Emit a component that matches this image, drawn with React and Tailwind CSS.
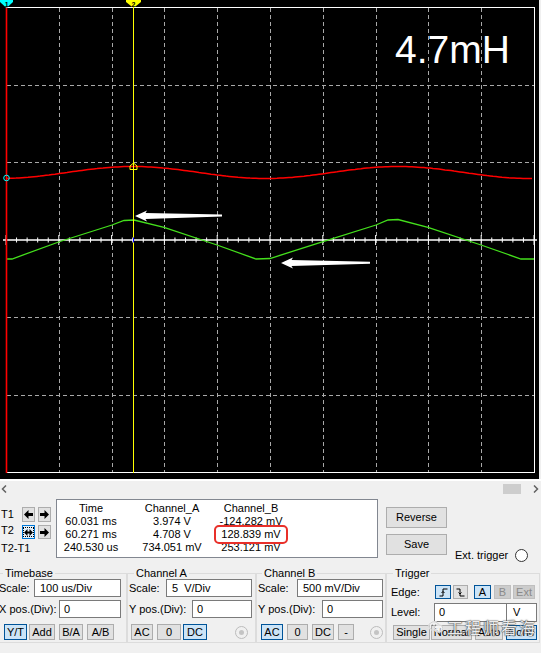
import React from 'react';

const gridX = [59.5, 112.5, 164.5, 217.5, 270.5, 323.5, 376.5, 428.5, 481.5];
const gridY = [85.5, 162.5, 317.5, 395.5];

const redPoints = (() => {
  const pts = [];
  for (let x = 7; x <= 534; x += 3) {
    const y = 172.5 - 6 * Math.cos((2 * Math.PI * (x - 133)) / 265);
    pts.push(x + ',' + y.toFixed(1));
  }
  return pts.join(' ');
})();

const greenPoints =
  '7,259 12,259 60,241.5 112,225 124,220.5 134,220 164,227.3 217,245 256,259 270,258.5 323,241.7 376,225 388,220 398,219.5 428,227.3 481,245 521,259 534,259';

const ticks = Array.from({ length: 51 }, (_, i) => ({ x: 6 + i * 10.56, major: i % 5 === 0 }));

function Scope() {
  return (
    <svg width="539" height="479" className="block">
      {gridX.map((x) => (
        <line key={'v' + x} x1={x} y1={8} x2={x} y2={472} stroke="#a8a8a8" strokeDasharray="4 3" />
      ))}
      {gridY.map((y) => (
        <line key={'h' + y} x1={7} y1={y} x2={534} y2={y} stroke="#a8a8a8" strokeDasharray="4 3" />
      ))}
      {/* frame */}
      <line x1={6} y1={7.5} x2={535} y2={7.5} stroke="#fff" />
      <line x1={534.5} y1={7} x2={534.5} y2={473} stroke="#fff" />
      <line x1={6} y1={472.5} x2={535} y2={472.5} stroke="#fff" />
      {/* centre axis */}
      <line x1={3} y1={240} x2={537} y2={240} stroke="#fff" strokeWidth="1.5" />
      {ticks.map((t) => (
        <line key={t.x} x1={t.x} y1={t.major ? 235 : 237.5} x2={t.x} y2={t.major ? 245 : 242.5} stroke="#fff" />
      ))}
      {/* traces */}
      <polyline points={redPoints} fill="none" stroke="#ff0000" strokeWidth="1.5" />
      <polyline points={greenPoints} fill="none" stroke="#44e01c" strokeWidth="1.3" />
      {/* cursors */}
      <line x1={6.5} y1={7} x2={6.5} y2={473} stroke="#ff0000" strokeWidth="1.6" />
      <line x1={133.5} y1={7} x2={133.5} y2={473} stroke="#ffff00" />
      <line x1={133.5} y1={237.5} x2={133.5} y2={242.5} stroke="#0000ff" />
      <polygon points="0,0 13,0 13,2 6.5,8 0,2" fill="#00ffff" />
      <text x="4.8" y="6.5" fontSize="7" fontWeight="bold" fontFamily="Liberation Sans" fill="#000">1</text>
      <polygon points="126,0 141,0 141,2 133.5,8 126,2" fill="#ffff00" />
      <text x="131.5" y="6.5" fontSize="7" fontWeight="bold" fontFamily="Liberation Sans" fill="#000">2</text>
      <circle cx={6.5} cy={178} r={2.8} fill="none" stroke="#00ffff" />
      <polygon points="133.5,163 137,166 137,169.5 130,169.5 130,166" fill="none" stroke="#ffff00" />
      {/* annotation arrows */}
      <polygon points="135,216 147,210.5 145.5,213 222,214.6 222,216.6 145.5,219 147,221.5" fill="#fff" />
      <polygon points="281,263 293,257.5 291.5,260 370,261.8 370,263.8 291.5,266 293,268.5" fill="#fff" />
      <text x="395" y="63" fontSize="39" fontFamily="Liberation Sans" fill="#fff">4.7mH</text>
    </svg>
  );
}

function Btn({ className = '', active, disabled, children }) {
  const tone = active
    ? 'bg-[#cce4f7] border-[#005499]'
    : disabled
    ? 'bg-[#cccccc] border-[#bfbfbf] text-[#8a8a8a]'
    : 'bg-[#e1e1e1] border-[#adadad]';
  return (
    <div className={'flex items-center justify-center border shrink-0 ' + tone + ' ' + className}>{children}</div>
  );
}

function Field({ className = '', children }) {
  return (
    <div className={'bg-white border border-[#7a7a7a] flex items-center pl-[4px] whitespace-pre shrink-0 ' + className}>
      {children}
    </div>
  );
}

function Radio({ className = '' }) {
  return (
    <div className={'w-[13px] h-[13px] rounded-full border border-[#bcbcbc] flex items-center justify-center shrink-0 ' + className}>
      <div className="w-[5px] h-[5px] rounded-full bg-[#c4c4c4]" />
    </div>
  );
}

function Arrow({ dir }) {
  const pts =
    dir === 'left'
      ? '0,4.5 4.5,0 4.5,3 9,3 9,6 4.5,6 4.5,9'
      : dir === 'right'
      ? '9,4.5 4.5,0 4.5,3 0,3 0,6 4.5,6 4.5,9'
      : '0,4.5 3.5,1 3.5,3.5 5.5,3.5 5.5,1 9,4.5 5.5,8 5.5,5.5 3.5,5.5 3.5,8';
  return (
    <svg width="9" height="9" viewBox="0 0 9 9">
      <polygon points={pts} fill="#000" />
    </svg>
  );
}

function Legend({ className = '', children }) {
  return <legend className={'px-[2px] leading-[12px] ' + className}>{children}</legend>;
}

export default function App() {
  return (
    <div className="relative w-[541px] h-[653px] overflow-hidden bg-[#f0f0f0] text-black text-[11px] leading-[13px] font-['Liberation_Sans',Arial,sans-serif]">
      <div className="w-[539px] h-[479px] bg-black">
        <Scope />
      </div>
      <div className="h-[2px] bg-white" />

      {/* scroll strip */}
      <div className="h-[15px] flex items-center pl-[1px] pr-[2px]">
        <svg width="6" height="8" viewBox="0 0 6 8">
          <polyline points="5,0.5 1.5,4 5,7.5" fill="none" stroke="#606060" strokeWidth="1.5" />
        </svg>
        <div className="ml-auto w-[18px] h-[10px] bg-[#cdcdcd]" />
        <svg width="6" height="8" viewBox="0 0 6 8" className="ml-[12px]">
          <polyline points="1,0.5 4.5,4 1,7.5" fill="none" stroke="#606060" strokeWidth="1.5" />
        </svg>
      </div>

      {/* cursor readout row */}
      <div className="flex h-[71px]">
        <div className="w-[56px] shrink-0 pt-[11px]">
          <div className="flex items-center h-[15px]">
            <span className="w-[22px] pl-[1px]">T1</span>
            <Btn className="w-[13px] h-[15px]"><Arrow dir="left" /></Btn>
            <Btn className="w-[13px] h-[15px] ml-[3px]"><Arrow dir="right" /></Btn>
          </div>
          <div className="flex items-center h-[14px] mt-[3px]">
            <span className="w-[22px] pl-[1px] -mt-[3px]">T2</span>
            <div className="w-[13px] h-[14px] border border-[#0078d7] bg-[#e5f1fb] flex items-center justify-center shrink-0">
              <div className="w-[11px] h-[10px] border border-dotted border-[#000] flex items-center justify-center">
                <Arrow dir="both" />
              </div>
            </div>
            <Btn className="w-[13px] h-[14px] ml-[3px]"><Arrow dir="right" /></Btn>
          </div>
          <div className="mt-[3px] pl-[1px]">T2-T1</div>
        </div>

        <div className="mt-[3px] h-[59px] w-[322px] shrink-0 bg-white border border-[#828790] pt-[2px] grid grid-cols-[68px_94px_64px] content-start text-center">
          <span>Time</span>
          <span>Channel_A</span>
          <span>Channel_B</span>
          <span>60.031 ms</span>
          <span>3.974 V</span>
          <span>-124.282 mV</span>
          <span>60.271 ms</span>
          <span>4.708 V</span>
          <span>
            <span className="relative inline-block">
              128.839 mV
              <span className="absolute -left-[7px] -right-[7px] -top-[3px] -bottom-[3px] border-2 border-[#e8302a] rounded-[5px]" />
            </span>
          </span>
          <span>240.530 us</span>
          <span>734.051 mV</span>
          <span>253.121 mV</span>
        </div>

        <div className="ml-[8px] pt-[11px] flex flex-col gap-[6px]">
          <Btn className="w-[61px] h-[21px]">Reverse</Btn>
          <Btn className="w-[61px] h-[21px]">Save</Btn>
        </div>

        <div className="ml-[8px] pt-[53px]">
          <div className="flex items-center h-[13px]">
            <span>Ext. trigger</span>
            <span className="ml-[7px] w-[13px] h-[13px] rounded-full border border-[#333] bg-white" />
          </div>
        </div>
      </div>

      {/* control groups */}
      <div className="flex">
        <fieldset className="w-[133px] shrink-0 -ml-[6px] border border-[#dcdcdc] pl-[4px] pr-[5px] pb-[2px]">
          <Legend className="ml-[4px]">Timebase</Legend>
          <div className="flex items-center justify-between h-[18px]">
            <span>Scale:</span>
            <Field className="w-[87px] h-[18px] pl-[5px]">100 us/Div</Field>
          </div>
          <div className="flex items-center justify-between h-[18px] mt-[3px]">
            <span>X pos.(Div):</span>
            <Field className="w-[62px] h-[18px]">0</Field>
          </div>
          <div className="flex h-[16px] mt-[6px] ml-[5px]">
            <Btn active className="w-[23px]">Y/T</Btn>
            <Btn className="w-[26px] ml-[2px]">Add</Btn>
            <Btn className="w-[24px] ml-[4px]">B/A</Btn>
            <Btn className="w-[27px] ml-[4px]">A/B</Btn>
          </div>
        </fieldset>

        <fieldset className="w-[129px] shrink-0 border border-[#dcdcdc] pl-[1px] pr-[3px] pb-[2px]">
          <Legend className="ml-[5px]">Channel A</Legend>
          <div className="flex items-center justify-between h-[18px]">
            <span>Scale:</span>
            <Field className="w-[86px] h-[18px] pl-[5px]">5  V/Div</Field>
          </div>
          <div className="flex items-center justify-between h-[18px] mt-[3px]">
            <span>Y pos.(Div):</span>
            <Field className="w-[60px] h-[18px]">0</Field>
          </div>
          <div className="flex items-center h-[16px] mt-[6px] ml-[2px]">
            <Btn className="w-[22px] h-[16px]">AC</Btn>
            <Btn className="w-[24px] h-[16px] ml-[4px]">0</Btn>
            <Btn active className="w-[24px] h-[16px] ml-[2px]">DC</Btn>
            <Radio className="ml-auto mr-[4px]" />
          </div>
        </fieldset>

        <fieldset className="w-[130px] shrink-0 border border-[#dcdcdc] pl-[1px] pr-[2px] pb-[2px]">
          <Legend className="ml-[4px]">Channel B</Legend>
          <div className="flex items-center justify-between h-[18px]">
            <span>Scale:</span>
            <Field className="w-[86px] h-[18px] pl-[5px]">500 mV/Div</Field>
          </div>
          <div className="flex items-center justify-between h-[18px] mt-[3px]">
            <span>Y pos.(Div):</span>
            <Field className="w-[61px] h-[18px]">0</Field>
          </div>
          <div className="flex items-center h-[16px] mt-[6px] ml-[3px]">
            <Btn active className="w-[22px] h-[16px]">AC</Btn>
            <Btn className="w-[21px] h-[16px] ml-[4px]">0</Btn>
            <Btn className="w-[22px] h-[16px] ml-[4px]">DC</Btn>
            <Btn className="w-[16px] h-[16px] ml-[4px]">-</Btn>
            <Radio className="ml-auto" />
          </div>
        </fieldset>

        <fieldset className="w-[152px] shrink-0 border border-[#dcdcdc] pl-[4px] pr-[2px] pb-[2px]">
          <Legend className="ml-[2px]">Trigger</Legend>
          <div className="flex items-center h-[14px] mt-[6px]">
            <span className="w-[44px]">Edge:</span>
            <Btn active className="w-[16px] h-[14px]">
              <svg width="9" height="9" viewBox="0 0 9 9">
                <path d="M0.5 8 H4 V1 H8.5 M2.5 5 L4 3.5 L5.5 5" fill="none" stroke="#000" />
              </svg>
            </Btn>
            <Btn className="w-[15px] h-[14px] ml-[2px]">
              <svg width="9" height="9" viewBox="0 0 9 9">
                <path d="M0.5 1 H4 V8 H8.5 M2.5 4.5 L4 6 L5.5 4.5" fill="none" stroke="#000" />
              </svg>
            </Btn>
            <Btn active className="w-[17px] h-[14px] ml-[6px]">A</Btn>
            <Btn disabled className="w-[17px] h-[14px] ml-[3px]">B</Btn>
            <Btn disabled className="w-[22px] h-[14px] ml-[2px]">Ext</Btn>
          </div>
          <div className="flex items-center h-[19px] mt-[4px]">
            <span className="w-[43px]">Level:</span>
            <Field className="w-[73px] h-[19px]">0</Field>
            <Field className="w-[31px] h-[19px] -ml-[1px] pl-[6px]">V</Field>
          </div>
          <div className="flex h-[15px] mt-[3px] ml-[2px]">
            <Btn className="w-[37px]">Single</Btn>
            <Btn className="w-[41px] ml-[1px]">Normal</Btn>
            <Btn className="w-[28px] ml-[3px]">Auto</Btn>
            <Btn active className="w-[31px] ml-[3px]">None</Btn>
          </div>
        </fieldset>
      </div>

      {/* watermark over the trigger buttons */}
      <div className="absolute left-[428px] top-[617px] flex items-center gap-[3px] pointer-events-none">
        <svg width="16" height="12" viewBox="0 0 16 12">
          <ellipse cx="6" cy="5" rx="5.2" ry="4.2" fill="none" stroke="#fff" strokeWidth="1.4" />
          <ellipse cx="6" cy="5" rx="5.2" ry="4.2" fill="none" stroke="#777" strokeWidth="0.4" />
          <ellipse cx="10.5" cy="7.5" rx="4.3" ry="3.5" fill="rgba(255,255,255,0.6)" stroke="#fff" strokeWidth="1.4" />
          <ellipse cx="10.5" cy="7.5" rx="4.3" ry="3.5" fill="none" stroke="#777" strokeWidth="0.4" />
          <circle cx="4.3" cy="4.2" r="0.7" fill="#777" />
          <circle cx="7.6" cy="4.2" r="0.7" fill="#777" />
        </svg>
        <span className="text-[16px] leading-[20px] tracking-[2px] text-white/90 [text-shadow:0_0_1px_#444,0_0_1px_#444,0_0_2px_#666] font-['Noto_Sans_CJK_SC',sans-serif]">
          工程师看海
        </span>
      </div>
    </div>
  );
}
